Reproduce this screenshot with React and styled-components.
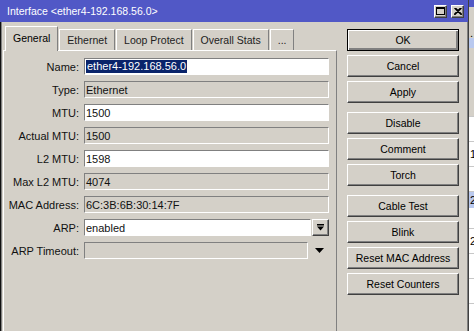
import React from "react";
import styled, { createGlobalStyle } from "styled-components";

const GlobalStyle = createGlobalStyle`
  html, body {
    margin: 0;
    padding: 0;
    background: #d4d0c8;
    overflow: hidden;
  }
  body {
    font-family: "Liberation Sans", Arial, sans-serif;
    font-size: 11px;
    color: #000;
  }
`;

const fields = [
  { label: "Name", value: "ether4-192.168.56.0", editable: true, selected: true },
  { label: "Type", value: "Ethernet" },
  { label: "MTU", value: "1500", editable: true },
  { label: "Actual MTU", value: "1500" },
  { label: "L2 MTU", value: "1598", editable: true },
  { label: "Max L2 MTU", value: "4074" },
  { label: "MAC Address", value: "6C:3B:6B:30:14:7F" },
  { label: "ARP", value: "enabled", editable: true, kind: "select" },
  { label: "ARP Timeout", value: "", kind: "optional" },
];

const buttonGroups = [
  ["OK", "Cancel", "Apply"],
  ["Disable", "Comment", "Torch"],
  ["Cable Test", "Blink", "Reset MAC Address", "Reset Counters"],
];

const tabs = ["General", "Ethernet", "Loop Protect", "Overall Stats", "..."];

const Root = styled.div`
  display: flex;
  width: 474px;
  height: 331px;
  overflow: hidden;
`;

const Window = styled.div`
  width: 467px;
  flex-shrink: 0;
  display: flex;
  flex-direction: column;
  background: #d4d0c8;
  border-left: 1px solid #101010;
  border-right: 1px solid #404040;
  box-shadow: inset 1px 0 #808080, inset -1px 0 #808080;
`;

const TitleBar = styled.div`
  height: 22px;
  display: flex;
  align-items: center;
  justify-content: space-between;
  background: #5158c6;
  color: #fff;
  padding: 0 4px 0 7px;
  margin-left: -1px;
  font-size: 10.5px;
`;

const TitleButtons = styled.div`
  display: flex;
  gap: 4px;
`;

const TitleButton = styled.div`
  width: 11px;
  height: 11px;
  display: flex;
  align-items: center;
  justify-content: center;
  background: #d4d0c8;
  border: 1px solid;
  border-color: #fff #404040 #404040 #fff;
  box-shadow: inset -1px -1px #808080;
`;

const Body = styled.div`
  flex: 1;
  display: flex;
  padding: 3px 0 0 2px;
`;

const TabArea = styled.div`
  width: 334px;
  display: flex;
  flex-direction: column;
`;

const TabStrip = styled.div`
  height: 25px;
  display: flex;
  align-items: flex-end;
  gap: 1px;
  padding-left: 2px;
  font-size: 10.5px;
`;

const Tab = styled.div`
  position: relative;
  height: ${(p) => (p.$active ? "25px" : "21px")};
  margin-bottom: ${(p) => (p.$active ? "-1px" : "0")};
  padding: 0 7px;
  display: flex;
  align-items: center;
  padding-bottom: ${(p) => (p.$active ? "3px" : "0")};
  box-sizing: border-box;
  background: #d4d0c8;
  border-top: 1px solid #fff;
  border-left: 1px solid #fff;
  border-right: 1px solid #808080;
  z-index: ${(p) => (p.$active ? 2 : 0)};
  color: ${(p) => (p.$active ? "#000" : "#222")};
`;

const TabPanel = styled.div`
  flex: 1;
  border-top: 1px solid #fff;
  border-left: 1px solid #fff;
  border-right: 1px solid #808080;
  padding: 7px 0 0 0;
`;

const Form = styled.div`
  display: grid;
  grid-template-columns: 75px 245px;
  column-gap: 5px;
  row-gap: 6px;
  align-items: center;
`;

const Label = styled.div`
  text-align: right;
  white-space: nowrap;
  color: #111;
`;

const FieldRow = styled.div`
  display: flex;
  align-items: center;
  gap: 1px;
`;

const Input = styled.div`
  height: 17px;
  box-sizing: border-box;
  flex: ${(p) => (p.$width ? "none" : "1")};
  width: ${(p) => (p.$width ? `${p.$width}px` : "auto")};
  background: ${(p) => (p.$editable ? "#fff" : "#d4d0c8")};
  border: 1px solid;
  border-color: #808080 #fff #fff #808080;
  padding: 0 1px;
  display: flex;
  align-items: center;
  white-space: nowrap;
  overflow: hidden;
  color: #111;
`;

const Selected = styled.span`
  background: #0a246a;
  color: #fff;
  padding: 0 1px;
  line-height: 13px;
`;

const DropButton = styled.div`
  width: 17px;
  height: 17px;
  box-sizing: border-box;
  display: flex;
  align-items: center;
  justify-content: center;
  background: #d4d0c8;
  border: 1px solid;
  border-color: #fff #404040 #404040 #fff;
  box-shadow: inset -1px -1px #808080;
`;

const ArrowSlot = styled.div`
  width: 21px;
  display: flex;
  justify-content: center;
`;

const ButtonColumn = styled.div`
  width: 112px;
  margin-left: 10px;
  padding-top: 4px;
  display: flex;
  flex-direction: column;
  gap: 9px;
`;

const ButtonGroup = styled.div`
  display: flex;
  flex-direction: column;
  gap: 4px;
`;

const Button = styled.div`
  height: 22px;
  box-sizing: border-box;
  display: flex;
  align-items: center;
  justify-content: center;
  font-size: 10.5px;
  background: #d4d0c8;
  border: 1px solid;
  border-color: ${(p) => (p.$default ? "#000" : "#fff #404040 #404040 #fff")};
  box-shadow: ${(p) =>
    p.$default
      ? "inset 1px 1px #fff, inset -2px -2px #808080"
      : "inset -1px -1px #808080"};
`;

const BackList = styled.div`
  flex: 1;
  display: flex;
  flex-direction: column;
  background: #fff;
  font-size: 11px;
  overflow: hidden;
`;

const BackBand = styled.div`
  height: ${(p) => p.$h}px;
  flex-shrink: 0;
  background: ${(p) => p.$bg || "#fff"};
  border-bottom: ${(p) => (p.$line ? "1px solid #c8c8c8" : "none")};
  padding-left: 1px;
  line-height: ${(p) => p.$h}px;
  overflow: hidden;
`;

const MaxIcon = () => (
  <svg width="9" height="8" viewBox="0 0 9 8">
    <rect x="0.5" y="0.5" width="8" height="7" fill="none" stroke="#000" />
    <rect x="0" y="0" width="9" height="2" fill="#000" />
  </svg>
);

const CloseIcon = () => (
  <svg width="8" height="7" viewBox="0 0 8 7">
    <path d="M0.5 0 L7.5 7 M1.5 0 L8 6.5 M7.5 0 L0.5 7 M6.5 0 L0 6.5" stroke="#000" strokeWidth="1.2" />
  </svg>
);

const DropIcon = () => (
  <svg width="7" height="7" viewBox="0 0 7 7">
    <rect x="0" y="0" width="7" height="1.5" fill="#000" />
    <polygon points="0,2.5 7,2.5 3.5,6.5" fill="#000" />
  </svg>
);

const DownTriangle = () => (
  <svg width="9" height="5" viewBox="0 0 9 5">
    <polygon points="0,0 9,0 4.5,5" fill="#000" />
  </svg>
);

const FieldValue = ({ f }) => {
  if (f.kind === "select") {
    return (
      <FieldRow>
        <Input $editable>{f.value}</Input>
        <DropButton>
          <DropIcon />
        </DropButton>
      </FieldRow>
    );
  }
  if (f.kind === "optional") {
    return (
      <FieldRow>
        <Input $width={224} />
        <ArrowSlot>
          <DownTriangle />
        </ArrowSlot>
      </FieldRow>
    );
  }
  return (
    <Input $editable={f.editable}>
      {f.selected ? <Selected>{f.value}</Selected> : f.value}
    </Input>
  );
};

export default function App() {
  return (
    <>
      <GlobalStyle />
      <Root>
        <Window>
          <TitleBar>
            <span>Interface &lt;ether4-192.168.56.0&gt;</span>
            <TitleButtons>
              <TitleButton>
                <MaxIcon />
              </TitleButton>
              <TitleButton>
                <CloseIcon />
              </TitleButton>
            </TitleButtons>
          </TitleBar>
          <Body>
            <TabArea>
              <TabStrip>
                {tabs.map((t, i) => (
                  <Tab key={t} $active={i === 0}>
                    {t}
                  </Tab>
                ))}
              </TabStrip>
              <TabPanel>
                <Form>
                  {fields.map((f) => (
                    <React.Fragment key={f.label}>
                      <Label>{f.label}:</Label>
                      <FieldValue f={f} />
                    </React.Fragment>
                  ))}
                </Form>
              </TabPanel>
            </TabArea>
            <ButtonColumn>
              {buttonGroups.map((g, gi) => (
                <ButtonGroup key={gi}>
                  {g.map((b) => (
                    <Button key={b} $default={b === "OK"}>
                      {b}
                    </Button>
                  ))}
                </ButtonGroup>
              ))}
            </ButtonColumn>
          </Body>
        </Window>
        <BackList>
          <BackBand $h={7} $bg="#5158c6" />
          <BackBand $h={21} $bg="#d4d0c8" />
          <BackBand $h={10} $bg="#d4d0c8">.</BackBand>
          <BackBand $h={10} $bg="#b9c9ef" />
          <BackBand $h={68} $bg="#d4d0c8" $line />
          <BackBand $h={24} $line />
          <BackBand $h={24} $line>1</BackBand>
          <BackBand $h={24} $line />
          <BackBand $h={16} $bg="#b9c9ef">2</BackBand>
          <BackBand $h={20} $line />
          <BackBand $h={24} $line>2</BackBand>
          <BackBand $h={24} $line />
          <BackBand $h={24} $line />
        </BackList>
      </Root>
    </>
  );
}
